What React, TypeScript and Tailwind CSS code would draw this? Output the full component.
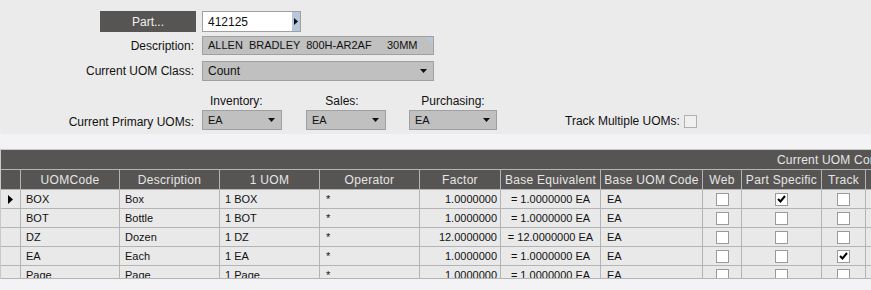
import React from "react";

const cols = "grid-cols-[20px_99px_100px_100px_100px_81px_100px_102px_39px_80px_44px_60px]";

type Row = { code: string; desc: string; uom: string; factor: string; base: string; web: boolean; part: boolean; track: boolean };

const rows: Row[] = [
  { code: "BOX", desc: "Box", uom: "1 BOX", factor: "1.0000000", base: "= 1.0000000 EA", web: false, part: true, track: false },
  { code: "BOT", desc: "Bottle", uom: "1 BOT", factor: "1.0000000", base: "= 1.0000000 EA", web: false, part: false, track: false },
  { code: "DZ", desc: "Dozen", uom: "1 DZ", factor: "12.0000000", base: "= 12.0000000 EA", web: false, part: false, track: false },
  { code: "EA", desc: "Each", uom: "1 EA", factor: "1.0000000", base: "= 1.0000000 EA", web: false, part: false, track: true },
  { code: "Page", desc: "Page", uom: "1 Page", factor: "1.0000000", base: "= 1.0000000 EA", web: false, part: false, track: false },
];

function Caret() {
  return (
    <svg width="7" height="4" viewBox="0 0 7 4" className="shrink-0">
      <path d="M0 0h7L3.5 4z" fill="#111" />
    </svg>
  );
}

function Select({ value, w, small }: { value: string; w: string; small?: boolean }) {
  return (
    <div className={`${w} h-[20px] bg-[#c0c0c0] border border-[#a0a0a0] flex items-center justify-between pl-[5px] pr-[6px] ${small ? "text-[11px]" : "text-[12px]"} text-[#111]`}>
      <span>{value}</span>
      <Caret />
    </div>
  );
}

function Check({ on }: { on: boolean }) {
  return (
    <div className="w-[13px] h-[13px] bg-white border border-[#9a9a9a] flex items-center justify-center">
      {on && (
        <svg width="9" height="8" viewBox="0 0 9 8">
          <path d="M1 4l2.5 2.5L8 1" stroke="#000" strokeWidth="2" fill="none" />
        </svg>
      )}
    </div>
  );
}

const cell = "border-r border-b border-[#b4b4b4] h-[19px] flex items-center whitespace-nowrap overflow-hidden";
const head = "border-r border-b border-[#b4b4b4] h-[20px] flex items-center justify-center whitespace-nowrap overflow-hidden text-[#e6e6e6] tracking-[0.3px]";

export default function App() {
  return (
    <div className="w-[871px] h-[290px] bg-[#f3f3f5] overflow-hidden text-[12px] text-[#111]" style={{ fontFamily: '"Liberation Sans", Arial, sans-serif' }}>
      {/* Header form */}
      <div className="h-[134px] bg-[#ebebeb] rounded-b-[3px] pt-[11px]">
        <div className="flex items-center">
          <div className="w-[196px] flex justify-end">
            <button className="w-[96px] h-[21px] bg-[#575553] text-[#f0f0f0] text-[12px]">Part...</button>
          </div>
          <div className="ml-[6px] w-[99px] h-[21px] flex border border-[#a0a0a0] bg-white">
            <div className="flex-1 pl-[5px] flex items-center">412125</div>
            <div className="w-[8px] bg-[#b8c8dc] flex items-center justify-center">
              <svg width="4" height="7" viewBox="0 0 4 7">
                <path d="M0 0l4 3.5L0 7z" fill="#111" />
              </svg>
            </div>
          </div>
        </div>

        <div className="flex items-center mt-[4px]">
          <div className="w-[194px] text-right">Description:</div>
          <div className="ml-[8px] relative w-[232px] h-[19px] bg-[#c0c0c0] border border-[#a0a0a0] flex items-center pl-[5px] whitespace-pre text-[11px]">
            ALLEN  BRADLEY  800H-AR2AF     30MM
            <svg className="absolute top-0 right-0" width="8" height="8" viewBox="0 0 8 8">
              <path d="M0 0h8v8z" fill="#b8c8dc" />
            </svg>
          </div>
        </div>

        <div className="flex items-center mt-[6px]">
          <div className="w-[194px] text-right">Current UOM Class:</div>
          <div className="ml-[8px]">
            <Select value="Count" w="w-[232px]" />
          </div>
        </div>

        <div className="flex mt-[11px]">
          <div className="w-[194px] text-right pt-[20px] leading-[20px]">Current Primary UOMs:</div>
          <div className="ml-[8px] flex gap-[24px]">
            <div className="flex flex-col">
              <div className="h-[18px] pl-[8px]">Inventory:</div>
              <Select value="EA" w="w-[80px]" small />
            </div>
            <div className="flex flex-col">
              <div className="h-[18px] text-center pr-[8px]">Sales:</div>
              <Select value="EA" w="w-[80px]" small />
            </div>
            <div className="flex flex-col -ml-[1px]">
              <div className="h-[18px] text-center">Purchasing:</div>
              <Select value="EA" w="w-[88px]" small />
            </div>
          </div>
          <div className="ml-[68px] pt-[22px] flex items-center gap-[4px] h-[36px]">
            <span>Track Multiple UOMs:</span>
            <div className="w-[13px] h-[13px] bg-[#f0f0f0] border border-[#b0b0b0]" />
          </div>
        </div>
      </div>

      {/* Grid */}
      <div className="mt-[15px] w-[900px] border-t border-l border-[#c8c8c8]">
        <div className="h-[19px] bg-[#575553] text-[#e6e6e6] flex items-center pl-[776px] whitespace-nowrap tracking-[0.2px]">
          Current UOM Conversions
        </div>
        <div className={`grid ${cols} bg-[#575553] border-t border-[#b4b4b4]`}>
          <div className={head}></div>
          <div className={head}>UOMCode</div>
          <div className={head}>Description</div>
          <div className={head}>1 UOM</div>
          <div className={head}>Operator</div>
          <div className={head}>Factor</div>
          <div className={head}>Base Equivalent</div>
          <div className={head}>Base UOM Code</div>
          <div className={head}>Web</div>
          <div className={head}>Part Specific</div>
          <div className={head}>Track</div>
          <div className={head}></div>
        </div>
        <div className="h-[89px] overflow-hidden border-b border-[#b4b4b4] text-[11px]">
          {rows.map((r, i) => (
            <div key={r.code} className={`grid ${cols} bg-[#e9e9e9]`}>
              <div className={`${cell} pl-[7px]`}>
                {i === 0 && (
                  <svg width="5" height="9" viewBox="0 0 5 9">
                    <path d="M0 0l5 4.5L0 9z" fill="#000" />
                  </svg>
                )}
              </div>
              <div className={`${cell} pl-[5px]`}>{r.code}</div>
              <div className={`${cell} pl-[5px]`}>{r.desc}</div>
              <div className={`${cell} pl-[5px]`}>{r.uom}</div>
              <div className={`${cell} pl-[6px]`}>*</div>
              <div className={`${cell} justify-end pr-[3px]`}>{r.factor}</div>
              <div className={`${cell} justify-center`}>{r.base}</div>
              <div className={`${cell} pl-[6px]`}>EA</div>
              <div className={`${cell} justify-center`}><Check on={r.web} /></div>
              <div className={`${cell} justify-center`}><Check on={r.part} /></div>
              <div className={`${cell} justify-center`}><Check on={r.track} /></div>
              <div className={cell}></div>
            </div>
          ))}
        </div>
      </div>
    </div>
  );
}
